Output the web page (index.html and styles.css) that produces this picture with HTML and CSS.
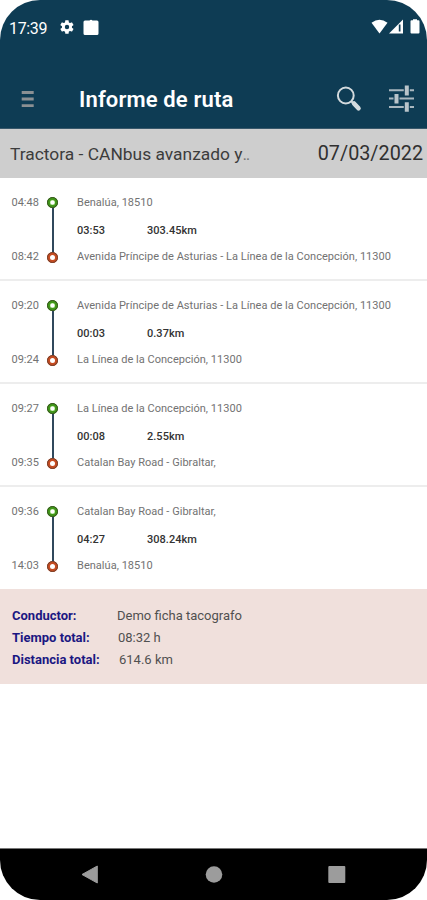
FILE: index.html
```html
<!DOCTYPE html>
<html lang="es">
<head>
<meta charset="utf-8">
<title>Informe de ruta</title>
<link rel="stylesheet" href="styles.css">
</head>
<body>
<div class="phone">
  <header class="top">
    <div class="status">
      <span class="clock">17:39</span>
      <svg class="gear" width="16" height="16" viewBox="0 0 24 24"><path fill="#fff" fill-rule="evenodd" d="M19.4 13c.1-.7.1-1.300 0-2l2.100-1.600c.2-.2.3-.4.1-.7l-2-3.400c-.1-.2-.4-.3-.6-.2l-2.500 1a7 7 0 0 0-1.700-1L14.400 2.400a.5.5 0 0 0-.5-.4h-4a.5.5 0 0 0-.5.4L9 5.100a8 8 0 0 0-1.700 1l-2.500-1c-.2-.1-.5 0-.6.2l-2 3.400c-.1.300-.1.500.1.700L4.500 11c-.1.700-.1 1.300 0 2l-2.200 1.600c-.2.200-.2.400-.1.700l2 3.400c.1.200.4.300.6.200l2.500-1c.5.400 1.100.8 1.700 1l.4 2.700c0 .2.200.4.500.4h4c.3 0 .5-.2.5-.4l.4-2.700c.6-.3 1.200-.6 1.700-1l2.500 1c.2.100.5 0 .6-.2l2-3.400c.1-.3.1-.5-.1-.7zM12 15.300a3.300 3.300 0 1 1 0-6.600 3.300 3.300 0 0 1 0 6.600z"/></svg>
      <svg class="note" width="16" height="17" viewBox="0 0 16 17"><path fill="#fff" d="M2 1.500h4.500Q8 .2 9.500 1.500H14Q15.500 1.500 15.500 3v11.500Q15.500 16 14 16H2Q.5 16 .5 14.500V3Q.5 1.500 2 1.500z"/></svg>
      <svg class="signals" width="50" height="16" viewBox="0 0 50 16"><path fill="#fff" d="M.5 3.800Q8.500-2.200 16.500 3.800L8.500 14.500z"/><path fill="#fff" d="M32 .5V14.500H18z"/><path fill="#0e3c54" d="M27.800 5.500h1.700v7h-1.700z"/><path fill="#fff" d="M40.500 1.300h1.500V.2h4v1.100h1.500Q48.500 1.300 48.500 2.300v11.200Q48.500 14.500 47.500 14.500h-7Q39.500 14.500 39.500 13.500V2.300Q39.500 1.300 40.500 1.300z"/></svg>
    </div>
    <div class="appbar">
      <svg class="menu" width="14" height="18" viewBox="0 0 14 18"><path stroke="#8b9093" stroke-width="2.800" d="M.7 2.500h12M.7 9h12M.7 15.700h12"/></svg>
      <h1>Informe de ruta</h1>
      <svg class="search" width="26" height="26" viewBox="0 0 26 26"><circle cx="9.800" cy="9.500" r="7.900" fill="none" stroke="#d3dadd" stroke-width="2"/><path stroke="#d3dadd" stroke-width="2" d="m15 15 3 3"/><path stroke="#d3dadd" stroke-width="4.600" stroke-linecap="round" d="m18 17.500 4.500 4.800"/></svg>
      <svg class="tune" width="27" height="28" viewBox="0 0 27 28"><path stroke="#a9b7bf" stroke-width="2" d="M1 5.300h25M1 13.400h25M1 22h25"/><path stroke="#0e3c54" stroke-width="6" d="M18.800 .5v10M8.500 8.500v10M18.800 17v10"/><path stroke="#b9c4ca" stroke-width="4" d="M18.800 .5v10M8.500 9v9.500M18.800 17.300v9.500"/></svg>
    </div>
  </header>
  <div class="vehicle"><span class="name">Tractora - CANbus avanzado y<span class="dots">..</span></span><span class="date">07/03/2022</span></div>
  <main>
    <section class="trip">
      <div class="times"><span>04:48</span><span>08:42</span></div>
      <div class="track"><i class="start"></i><i class="end"></i></div>
      <div class="info"><span>Benalúa, 18510</span><div class="stats"><b>03:53</b><b>303.45km</b></div><span>Avenida Príncipe de Asturias - La Línea de la Concepción, 11300</span></div>
    </section>
    <section class="trip">
      <div class="times"><span>09:20</span><span>09:24</span></div>
      <div class="track"><i class="start"></i><i class="end"></i></div>
      <div class="info"><span>Avenida Príncipe de Asturias - La Línea de la Concepción, 11300</span><div class="stats"><b>00:03</b><b>0.37km</b></div><span>La Línea de la Concepción, 11300</span></div>
    </section>
    <section class="trip">
      <div class="times"><span>09:27</span><span>09:35</span></div>
      <div class="track"><i class="start"></i><i class="end"></i></div>
      <div class="info"><span>La Línea de la Concepción, 11300</span><div class="stats"><b>00:08</b><b>2.55km</b></div><span>Catalan Bay Road - Gibraltar,</span></div>
    </section>
    <section class="trip">
      <div class="times"><span>09:36</span><span>14:03</span></div>
      <div class="track"><i class="start"></i><i class="end"></i></div>
      <div class="info"><span>Catalan Bay Road - Gibraltar,</span><div class="stats"><b>04:27</b><b>308.24km</b></div><span>Benalúa, 18510</span></div>
    </section>
  </main>
  <section class="summary">
    <div class="row driver"><b>Conductor:</b><span>Demo ficha tacografo</span></div>
    <div class="row time"><b>Tiempo total:</b><span>08:32 h</span></div>
    <div class="row distance"><b>Distancia total:</b><span>614.6 km</span></div>
  </section>
  <footer class="nav">
    <svg width="18" height="20" viewBox="0 0 18 20"><path fill="#9c9c9c" stroke="#9c9c9c" stroke-linejoin="round" d="M0 10.500 15.300 2v17z"/></svg>
    <svg width="18" height="20" viewBox="0 0 18 20"><circle cx="9" cy="10.500" r="8.300" fill="#9c9c9c"/></svg>
    <svg width="18" height="20" viewBox="0 0 18 20"><rect x=".3" y="2" width="17" height="17" rx="1" fill="#9c9c9c"/></svg>
  </footer>
</div>
</body>
</html>
```

FILE: styles.css
```css
* { box-sizing: border-box; }
body { margin: 0; background: #fff; font-family: Roboto, "Liberation Sans", sans-serif; }
.phone { width: 427px; height: 900px; border-radius: 40px; overflow: hidden; display: flex; flex-direction: column; background: #fff; white-space: nowrap; }
.top { height: 129px; flex: none; background: #0e3c54; border-bottom: 1px solid #38586b; color: #fff; }
.status { height: 54px; display: flex; align-items: center; padding: 0 5px 0 9px; }
.clock { width: 50px; font-size: 16px; letter-spacing: -.35px; padding-top: 2px; }
.note { margin-left: 8px; }
.signals { margin-left: auto; margin-right: 1px; }
.appbar { height: 90px; display: flex; align-items: center; padding-left: 21px; }
.menu { margin-right: 44px; }
h1 { margin: 0; width: 257px; font-size: 22px; line-height: 30px; font-weight: 600; letter-spacing: .14px; padding-top: 2px; }
.tune { margin-left: 26px; }
.vehicle { height: 49px; flex: none; background: #cecece; display: flex; justify-content: space-between; align-items: center; padding: 0 4px 0 10px; color: #3c3c3c; }
.name { font-size: 17.4px; }
.dots { color: #777; letter-spacing: -1.4px; }
.date { font-size: 19.8px; color: #303030; }
.trip { height: 103px; display: grid; grid-template-columns: 35px 12px 1fr; border-bottom: 2px solid #ededed; padding: 17px 0 0 12px; font-size: 11px; color: #727272; line-height: 14px; }
.trip:last-child { height: 102px; border-bottom: 0; }
.times, .info { display: flex; flex-direction: column; justify-content: space-between; height: 68px; margin-top: 1px; }
.track { height: 66px; margin-top: 2px; display: flex; flex-direction: column; justify-content: space-between; background: linear-gradient(#30485c, #30485c) 50% 50% / 2px 56px no-repeat; }
.track i { width: 11px; height: 11px; border-radius: 50%; background: #fff; border: 3px solid #409818; box-shadow: inset 0 0 0 .5px #b8e898; outline: 1px solid #385020; outline-offset: -1px; }
.track .end { border-color: #c64b20; box-shadow: none; outline-color: #70402c; }
.times { margin-left: -.5px; }
.info { margin-left: 18px; letter-spacing: .03px; }
.stats { display: flex; color: #333; padding-top: 1px; }
.stats b { width: 70px; font-weight: 500; }
.summary { height: 95px; flex: none; background: #f0e0dc; padding: 16px 12px; font-size: 13px; line-height: 22px; color: #505050; }
.row { display: flex; }
.row b { color: #1b1782; font-weight: 700; width: 105px; }
.time b { width: 106px; }
.distance b { width: 107px; }
.nav { height: 52px; flex: none; margin-top: auto; background: #000; border-top: 1px solid #777; display: flex; justify-content: center; gap: 105px; padding-top: 15px; }
```
